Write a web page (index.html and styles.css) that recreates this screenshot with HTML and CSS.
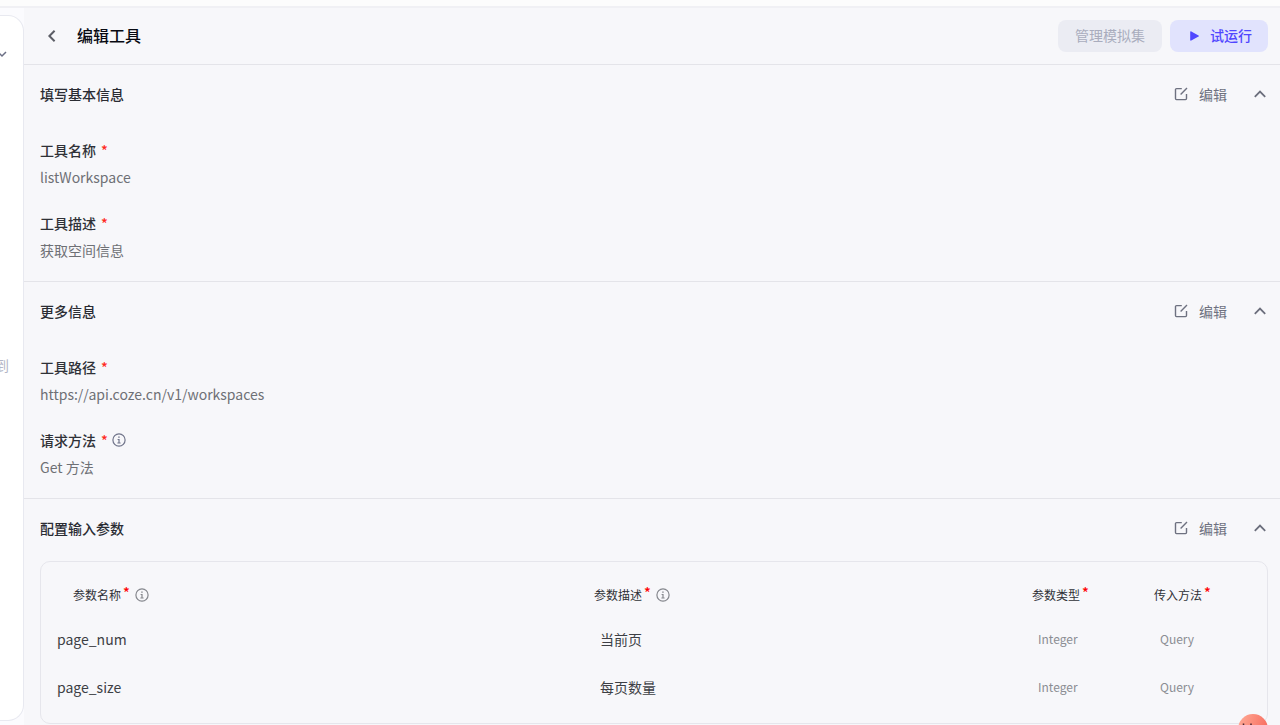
FILE: index.html
```html
<!DOCTYPE html>
<html lang="zh-CN">
<head>
<meta charset="utf-8">
<meta name="viewport" content="width=device-width, initial-scale=1">
<title>编辑工具</title>
<link rel="stylesheet" href="styles.css">
</head>
<body>
<svg class="sprite" aria-hidden="true">
  <symbol id="edit" viewBox="0 0 16 16"><path d="M8.800 2.600H3.500a1 1 0 0 0-1 1v9a1 1 0 0 0 1 1h9a1 1 0 0 0 1-1V8M7.600 8.600 14 2.100" fill="none" stroke="currentColor" stroke-width="1.400"/></symbol>
  <symbol id="up" viewBox="0 0 16 16"><path d="M2.800 10.800 8 5.600l5.200 5.200" fill="none" stroke="currentColor" stroke-width="1.800"/></symbol>
  <symbol id="info" viewBox="0 0 16 16"><circle cx="8" cy="8" r="6.100" fill="none" stroke="currentColor" stroke-width="1.200"/><path d="M7.200 4.400h1.500v1.400H7.200zM6.600 7h2v3.600h1v.9H6.400v-.9h1V7.900h-.8z" fill="currentColor"/></symbol>
</svg>
<div class="topbar"></div>
<div class="shell">
  <aside class="side">
    <svg class="side-arrow" viewBox="0 0 12 12" aria-hidden="true"><path d="M2 4l4 4 4-4" fill="none" stroke="currentColor" stroke-width="1.500"/></svg>
    <span class="side-text">到</span>
  </aside>
  <main class="main">
    <header class="head">
      <button class="back" type="button" aria-label="返回"><svg viewBox="0 0 16 16"><path d="M10.600 2.800 5.400 8l5.200 5.200" fill="none" stroke="currentColor" stroke-width="2"/></svg></button>
      <h1 class="title">编辑工具</h1>
      <div class="actions">
        <button class="btn btn-muted" type="button" disabled>管理模拟集</button>
        <button class="btn btn-run" type="button"><svg viewBox="0 0 16 16"><path d="M4.200 4.100v7.800c0 .7.5 1 1.100.7l7.200-4c.6-.3.6-.9 0-1.200l-7.200-4c-.6-.3-1.100 0-1.100.7z" fill="currentColor"/></svg>试运行</button>
      </div>
    </header>

    <section class="section">
      <div class="section-head">
        <h2 class="section-title">填写基本信息</h2>
        <button class="edit" type="button"><svg><use href="#edit"/></svg>编辑</button>
        <button class="fold" type="button" aria-label="收起"><svg><use href="#up"/></svg></button>
      </div>
      <dl class="fields">
        <div><dt>工具名称<span class="req">*</span></dt><dd>listWorkspace</dd></div>
        <div><dt>工具描述<span class="req">*</span></dt><dd>获取空间信息</dd></div>
      </dl>
    </section>

    <section class="section">
      <div class="section-head">
        <h2 class="section-title">更多信息</h2>
        <button class="edit" type="button"><svg><use href="#edit"/></svg>编辑</button>
        <button class="fold" type="button" aria-label="收起"><svg><use href="#up"/></svg></button>
      </div>
      <dl class="fields">
        <div><dt>工具路径<span class="req">*</span></dt><dd>https://api.coze.cn/v1/workspaces</dd></div>
        <div><dt>请求方法<span class="req">*</span><svg class="info"><use href="#info"/></svg></dt><dd>Get 方法</dd></div>
      </dl>
    </section>

    <section class="section">
      <div class="section-head">
        <h2 class="section-title">配置输入参数</h2>
        <button class="edit" type="button"><svg><use href="#edit"/></svg>编辑</button>
        <button class="fold" type="button" aria-label="收起"><svg><use href="#up"/></svg></button>
      </div>
      <div class="card">
        <table class="params">
          <colgroup><col class="c-name"><col><col class="c-type"><col class="c-way"></colgroup>
          <thead><tr>
            <th><div class="th">参数名称<span class="star">*</span><svg class="info"><use href="#info"/></svg></div></th>
            <th><div class="th">参数描述<span class="star">*</span><svg class="info"><use href="#info"/></svg></div></th>
            <th><div class="th">参数类型<span class="star">*</span></div></th>
            <th><div class="th">传入方法<span class="star">*</span></div></th>
          </tr></thead>
          <tbody>
            <tr><td>page_num</td><td>当前页</td><td>Integer</td><td>Query</td></tr>
            <tr><td>page_size</td><td>每页数量</td><td>Integer</td><td>Query</td></tr>
          </tbody>
        </table>
      </div>
    </section>
  </main>
</div>
<button class="helper" type="button" aria-label="助手"><svg viewBox="0 0 30 30"><path d="M5.500 12V9.500M13 12V9.500" stroke="#4b2730" stroke-width="1.500"/></svg></button>
</body>
</html>
```
FILE: styles.css
```css
* { box-sizing: border-box; }
body {
  margin: 0;
  height: 100vh;
  display: flex;
  flex-direction: column;
  overflow: hidden;
  background: #fbfbfe;
  color: #2f3137;
  font: 400 14px/20px "Noto Sans CJK SC", sans-serif;
}
button { margin: 0; padding: 0; border: 0; background: none; font: inherit; color: inherit; }
svg { display: block; flex: none; width: 16px; height: 16px; }
h1, h2, dl, dd { margin: 0; }
.sprite { position: absolute; width: 0; height: 0; }

.topbar { flex: none; height: 8px; background: #fcfcfc; border-bottom: 2px solid #f0f0f4; }
.shell { flex: 1; min-height: 0; display: flex; }
.side {
  flex: none;
  width: 24px;
  margin: 7px 0 4px;
  padding-top: 32px;
  background: #fff;
  border: 1px solid #e8e9f0;
  border-left: 0;
  border-radius: 0 16px 16px 0;
  overflow: hidden;
}
.side-arrow { width: 12px; height: 12px; margin-left: -4px; color: #6b6f85; }
.side-text { display: block; margin: 295px 0 0 -5px; color: #b3b6c6; }
.main { flex: 1; min-width: 0; background: #f7f7fa; }

.head {
  display: flex;
  align-items: center;
  height: 57px;
  padding: 0 12px 0 20px;
  border-bottom: 1px solid #e4e4e9;
}
.back { color: #5c5e66; }
.title { margin-left: 17px; padding-bottom: 2px; font-size: 16px; line-height: 24px; font-weight: 500; color: #080a12; }
.actions { display: flex; gap: 8px; margin-left: auto; }
.btn { display: flex; align-items: center; height: 32px; padding: 0 16px 2px; border-radius: 8px; font-weight: 500; }
.btn-muted { background: #ebecf3; color: #a9acbd; font-weight: 400; padding: 0 17px 2px; }
.btn-run { gap: 8px; background: #e1e3fd; color: #5147ff; }
.btn-run svg { margin-top: 2px; }

.section { padding: 0 12px 0 16px; border-bottom: 1px solid #e4e4e9; }
.section:last-child { border-bottom: 0; }
.section-head { display: flex; align-items: center; height: 58px; color: #6b6e7c; }
.section-title { margin-right: auto; font-size: 14px; line-height: 20px; font-weight: 500; color: #2a2c33; }
.edit { display: flex; align-items: center; gap: 10px; color: #6e7180; }
.fold { margin-left: 25px; }
.fields { display: grid; gap: 20px; padding: 13px 0 19px; }
.fields dt { display: flex; align-items: center; padding-top: 3px; line-height: 22px; font-weight: 500; }
.fields dd { padding-top: 4px; line-height: 24px; color: #6e7075; }
.req { margin-left: 5px; color: #ff2b1c; }
.fields .info { margin-left: 3px; color: #70748a; }

.card { margin-top: 4px; padding: 12px 0; border: 1px solid #e6e6ec; border-radius: 10px; }
.params { width: 100%; table-layout: fixed; border-collapse: collapse; }
.c-name { width: 543px; }
.c-type { width: 122px; }
.c-way { width: 123px; }
.params th { height: 41px; padding: 0 0 0 16px; text-align: left; vertical-align: middle; font-size: 12px; font-weight: 400; }
.params td { height: 48px; padding: 0 0 0 16px; color: #3d3f45; }
.params td:nth-child(3), .params td:nth-child(4) { font-size: 12px; color: #8b8d93; }
.th { display: flex; align-items: center; margin-left: -6px; }
th:first-child .th { margin-left: 16px; }
.star { align-self: flex-start; margin-left: 2px; font-size: 14px; font-weight: 500; line-height: 15px; color: #f00; }
.params .info { margin-left: 4px; color: #85878d; }

.helper {
  position: absolute;
  right: 12px;
  bottom: -19px;
  width: 30px;
  height: 30px;
  border-radius: 50%;
  background: linear-gradient(110deg, #ffad98, #f66155);
  overflow: hidden;
}
.helper svg { width: 30px; height: 30px; }
```
